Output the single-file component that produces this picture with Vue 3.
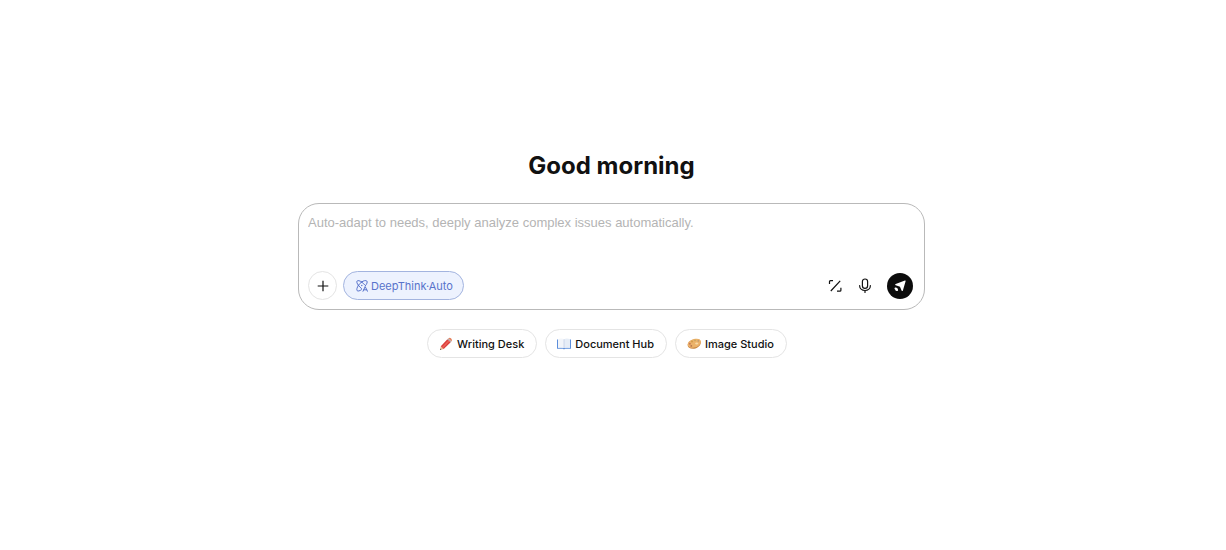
<script setup>
import { ref } from 'vue'

const message = ref('')
</script>

<template>
  <main class="page">
    <h1 class="greeting">Good morning</h1>

    <form class="composer" @submit.prevent>
      <textarea
        v-model="message"
        class="prompt"
        rows="2"
        aria-label="Message"
        placeholder="Auto-adapt to needs, deeply analyze complex issues automatically."
      ></textarea>
      <div class="toolbar">
        <button type="button" class="add" aria-label="Add attachment">
          <svg width="12" height="12" viewBox="0 0 12 12" fill="none" stroke="currentColor" stroke-width="1.2">
            <path d="M6 .7v10.6M.7 6h10.6" />
          </svg>
        </button>
        <button type="button" class="mode">
          <svg width="12" height="12" viewBox="0 0 12 12" fill="none" stroke="currentColor" stroke-width="1" stroke-linecap="round" stroke-linejoin="round">
            <path d="M5.600 2C3.800.6 1.800.2 1.100 1s-.2 2.500 1.300 4.300M5.600 2C7.600.5 10 .2 10.800 1c.9.900.2 2.900-1.500 4.900M2.400 5.300C.9 7.500.4 9.900 1.200 10.700c.7.7 2.400.3 4.300-1M2.400 5.300C3.300 4 4.400 2.900 5.600 2M5.600 2c1.200.8 2.300 1.800 3.100 2.900M2.400 5.300c.8 1.200 1.900 2.300 3.100 3.200" />
            <circle cx="5.800" cy="5.500" r=".7" fill="currentColor" stroke="none" />
            <path d="M7 11.300 9.200 6.600l2.300 4.700M7.800 9.800h2.900" />
          </svg>
          <span>DeepThink·Auto</span>
        </button>
        <span class="spacer"></span>
        <button type="button" class="tool" aria-label="Enhance prompt">
          <svg width="14" height="14" viewBox="0 0 14 14" fill="none" stroke="currentColor" stroke-width="1.200" stroke-linejoin="round">
            <path d="M1.500 5V2.700q0-1 1-1H5M2.800 12 12.200 1.800M12.900 8.700v2.500q0 1-1 1H9" />
          </svg>
        </button>
        <button type="button" class="tool voice" aria-label="Voice input">
          <svg width="14" height="16" viewBox="0 0 14 16" fill="none" stroke="currentColor" stroke-width="1.200" stroke-linecap="round">
            <rect x="4.400" y="1" width="5.200" height="9.400" rx="2.600" />
            <path d="M1.600 7.500c0 3 2.300 5 5.400 5s5.400-2 5.400-5M7 12.500v2" />
          </svg>
        </button>
        <button type="submit" class="send" aria-label="Send">
          <svg width="14" height="14" viewBox="0 0 14 14" fill="currentColor">
            <path d="M11.900 1.600c.6-.2.9.1.700.7L9.900 11.500c-.2.700-.9.800-1.200.2L7.300 8.500c-.2-.5-.4-.7-.9-.9L2.700 6.200c-.7-.3-.7-1 0-1.200z" />
            <path d="M2.200 8.600c1.500-.3 3 1 2.900 2.800-.7.700-2 .9-2.500.2-.4-.6-.2-1-.8-1.400-.5-.4-.3-1.300.4-1.600z" />
          </svg>
        </button>
      </div>
    </form>

    <nav class="shortcuts" aria-label="Shortcuts">
      <button type="button" class="chip">
        <svg width="14" height="14" viewBox="0 0 14 14">
          <path d="m1 13 .8-3.700 2.900 2.700z" fill="#e9bd91" />
          <path d="m1 13 .4-1.600 1 1z" fill="#4b4145" />
          <path d="M1.800 9.300 8.400 2.200l3.300 3-7 6.800z" fill="#d93f3b" />
          <path d="m2.800 10.200 6.700-7 1.100 1-6.800 7z" fill="#ec6258" />
          <path d="m8.400 2.200 1-1 3.200 3-.9 1z" fill="#b9a6a1" />
          <path d="M9.400 1.200c.9-.9 2-.6 2.600 0 .8.800 1.300 2 .6 3z" fill="#e5805c" />
        </svg>
        <span>Writing Desk</span>
      </button>
      <button type="button" class="chip">
        <svg width="14" height="14" viewBox="0 0 14 14">
          <path d="M0 2.500h1v8.200h12V2.500h1v9.300H8l-1 .6-1-.6H0z" fill="#5c8edb" />
          <path d="M1 2Q5 .8 7 2.300v8.800Q5 9.800 1 10.500z" fill="#f2f5fa" />
          <path d="M13 2Q9 .8 7 2.300v8.800q2-1.300 6-.6z" fill="#e6edf7" />
          <path d="M7 2.300v8.800" stroke="#b5c5e0" stroke-width=".6" />
        </svg>
        <span>Document Hub</span>
      </button>
      <button type="button" class="chip">
        <svg width="14" height="14" viewBox="0 0 14 14">
          <path d="M.7 7.700C1.200 4.200 6 2 9.800 2c3.200 0 4.600 2 3.800 4.700-.8 2.900-4.100 5-7.600 5C2.500 11.700.4 10.300.7 7.700z" fill="#c98742" />
          <path d="M.7 7C1.200 3.700 6 1.700 9.800 1.700c3.200 0 4.600 1.800 3.800 4.400-.8 2.700-4.100 4.700-7.600 4.700C2.500 10.800.4 9.400.7 7z" fill="#ebb26a" />
          <ellipse cx="9.700" cy="6.500" rx="1.600" ry=".9" fill="#f8d9a4" />
          <circle cx="2.800" cy="6.800" r="1" fill="#c87758" />
          <circle cx="5" cy="4.500" r="1" fill="#d09a4a" />
          <circle cx="8" cy="3.300" r=".9" fill="#c5a65f" />
          <circle cx="11.300" cy="3.900" r=".8" fill="#b99a76" />
          <circle cx="4.300" cy="8.900" r=".9" fill="#b87850" />
        </svg>
        <span>Image Studio</span>
      </button>
    </nav>
  </main>
</template>

<style>
body {
  margin: 0;
  background: #fff;
}
</style>

<style scoped>
.page {
  box-sizing: border-box;
  min-height: 100vh;
  padding: 151px 19px 32px 16px;
  display: flex;
  flex-direction: column;
  align-items: center;
  font-family: Inter, "Liberation Sans", sans-serif;
  color: #111;
}

.greeting {
  margin: 0 0 22px;
  font-size: 24px;
  line-height: 30px;
  font-weight: 700;
}

.composer {
  box-sizing: border-box;
  width: 100%;
  max-width: 627px;
  padding: 9px 11px 9px 9px;
  border: 1px solid #b9b9b9;
  border-radius: 21px;
  background: #fff;
}

.prompt {
  display: block;
  box-sizing: border-box;
  width: 100%;
  height: 58px;
  padding: 0;
  border: 0;
  outline: 0;
  resize: none;
  background: transparent;
  font-family: "Liberation Sans", Arial, sans-serif;
  font-size: 13px;
  line-height: 20px;
  color: #111;
}

.prompt::placeholder {
  color: #b4b4b4;
  opacity: 1;
}

.toolbar {
  display: flex;
  align-items: center;
}

button {
  display: flex;
  align-items: center;
  justify-content: center;
  box-sizing: border-box;
  margin: 0;
  padding: 0;
  border: 0;
  background: transparent;
  font-family: inherit;
  color: #111;
  cursor: pointer;
}

svg {
  flex: none;
}

.add {
  width: 29px;
  height: 29px;
  border: 1px solid #e4e4e4;
  border-radius: 50%;
}

.mode {
  height: 29px;
  margin-left: 6px;
  padding: 0 10px 0 12px;
  gap: 3px;
  border: 1px solid #a3b4df;
  border-radius: 15px;
  background: #edf2fe;
  font-size: 11px;
  line-height: 16px;
  color: #5873cb;
}

.spacer {
  flex: 1;
}

.tool {
  width: 16px;
  height: 26px;
}

.voice {
  margin: 0 14px;
}

.send {
  width: 26px;
  height: 26px;
  border-radius: 50%;
  background: #0c0c0c;
  color: #fff;
}

.shortcuts {
  display: flex;
  flex-wrap: wrap;
  justify-content: center;
  gap: 8px;
  margin-top: 19px;
  padding-right: 9px;
}

.chip {
  height: 29px;
  padding: 0 12px 0 11px;
  gap: 4px;
  border: 1px solid #e4e4e4;
  border-radius: 15px;
  font-size: 11px;
  line-height: 16px;
  font-weight: 500;
}
</style>
